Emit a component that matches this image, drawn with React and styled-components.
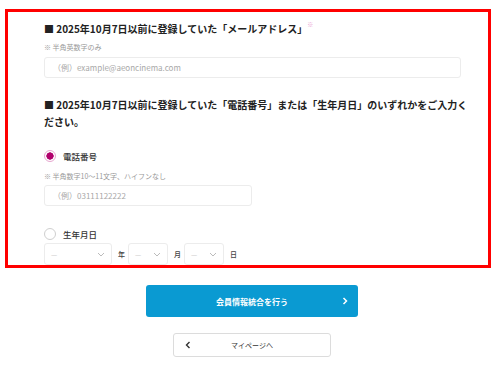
import styled, { createGlobalStyle } from 'styled-components'

const GlobalStyle = createGlobalStyle`
  html, body {
    margin: 0;
    padding: 0;
    background: #fff;
  }
  body {
    font-family: "Noto Sans CJK JP", "Noto Sans", sans-serif;
    color: #222;
  }
`;

const Frame = styled.div`
  box-sizing: border-box;
  margin: 9px 0 0 5px;
  width: 486px;
  height: 259px;
  border: 3px solid #ff0000;
  overflow: hidden;
  padding: 8px 0 0 36px;
`;

const Heading = styled.h2`
  margin: ${props => props.$top || 0}px 0 0;
  font-size: 10px;
  line-height: 17px;
  font-weight: 700;
  color: #222;
  width: 425px;
`;

const Required = styled.span`
  font-size: 6px;
  color: #eaa0d2;
  vertical-align: top;
  line-height: 10px;
  margin-left: 0;
`;

const Hint = styled.p`
  margin: ${props => props.$top}px 0 0;
  font-size: 7px;
  line-height: 10px;
  color: #999;
`;

const TextInput = styled.input`
  display: block;
  box-sizing: border-box;
  margin-top: ${props => props.$top}px;
  width: ${props => props.$width}px;
  height: 21px;
  border: 1px solid #ececec;
  border-radius: 3px;
  padding: 0 8px;
  font-family: inherit;
  font-size: 8px;
  color: #333;
  outline: none;
  &::placeholder {
    color: #a8a8a8;
  }
`;

const RadioRow = styled.label`
  display: flex;
  align-items: center;
  gap: 7px;
  height: 14px;
  margin-top: ${props => props.$top}px;
  font-size: 8.5px;
  font-weight: 500;
  color: #333;
  cursor: pointer;
`;

const RadioMark = styled.span`
  box-sizing: border-box;
  width: 12px;
  height: 12px;
  border-radius: 50%;
  border: 1px solid ${props => props.$checked ? '#e7a6cf' : '#cfcfcf'};
  background: ${props => props.$checked ? 'radial-gradient(circle, #b1006c 0 3.4px, #fff 3.9px)' : '#fff'};
`;

const DateRow = styled.div`
  display: flex;
  align-items: center;
  margin-top: 2px;
`;

const SelectBox = styled.div`
  box-sizing: border-box;
  width: ${props => props.$width}px;
  height: 22px;
  border: 1px solid #ececec;
  border-radius: 3px;
  display: flex;
  align-items: center;
  justify-content: space-between;
  padding: 0 6px 0 6px;
  font-size: 7px;
  color: #c8c8c8;
`;

const Unit = styled.span`
  font-size: 7px;
  font-weight: 500;
  color: #444;
  margin: 0 3px 0 6px;
`;

const Actions = styled.div`
  display: flex;
  flex-direction: column;
  align-items: center;
  padding: 17px 0 0 6px;
  gap: 16px;
`;

const PrimaryButton = styled.button`
  position: relative;
  width: 212px;
  height: 32px;
  border: none;
  border-radius: 3px;
  background: #0a9ad2;
  color: #fff;
  font-family: inherit;
  font-size: 8px;
  font-weight: 700;
  cursor: pointer;
`;

const SecondaryButton = styled.button`
  position: relative;
  box-sizing: border-box;
  width: 158px;
  height: 24px;
  border: 1px solid #dcdcdc;
  border-radius: 3px;
  background: #fff;
  color: #333;
  font-family: inherit;
  font-size: 7px;
  cursor: pointer;
`;

const Chevron = styled.svg`
  position: absolute;
  top: 50%;
  transform: translateY(-50%);
  ${props => props.$side}: ${props => props.$offset}px;
`;

function SmallChevron({ color = '#bbb' }) {
  return (
    <svg width="8" height="5" viewBox="0 0 8 5">
      <path d="M1 1l3 3 3-3" fill="none" stroke={color} strokeWidth="1" />
    </svg>
  );
}

function Select({ width }) {
  return (
    <SelectBox $width={width}>
      <span>—</span>
      <SmallChevron />
    </SelectBox>
  );
}

export default function App() {
  return (
    <>
      <GlobalStyle />
      <Frame>
        <Heading>
          ■ 2025年10月7日以前に登録していた「メールアドレス」<Required>※</Required>
        </Heading>
        <Hint $top={5}>※ 半角英数字のみ</Hint>
        <TextInput $top={5} $width={417} placeholder="（例）example@aeoncinema.com" />

        <Heading $top={18}>
          ■ 2025年10月7日以前に登録していた「電話番号」または「生年月日」のいずれかをご入力ください。
        </Heading>

        <RadioRow $top={19}>
          <RadioMark $checked />
          電話番号
        </RadioRow>
        <Hint $top={8}>※ 半角数字10〜11文字、ハイフンなし</Hint>
        <TextInput $top={4} $width={208} placeholder="（例）03111122222" />

        <RadioRow $top={21}>
          <RadioMark />
          生年月日
        </RadioRow>
        <DateRow>
          <Select width={68} />
          <Unit>年</Unit>
          <Select width={40} />
          <Unit>月</Unit>
          <Select width={40} />
          <Unit>日</Unit>
        </DateRow>
      </Frame>

      <Actions>
        <PrimaryButton>
          会員情報統合を行う
          <Chevron $side="right" $offset={10} width="6" height="8" viewBox="0 0 6 8">
            <path d="M1.5 1l3 3-3 3" fill="none" stroke="#fff" strokeWidth="1.5" />
          </Chevron>
        </PrimaryButton>
        <SecondaryButton>
          <Chevron $side="left" $offset={11} width="6" height="8" viewBox="0 0 6 8">
            <path d="M4.5 1l-3 3 3 3" fill="none" stroke="#333" strokeWidth="1.4" />
          </Chevron>
          マイページへ
        </SecondaryButton>
      </Actions>
    </>
  );
}
